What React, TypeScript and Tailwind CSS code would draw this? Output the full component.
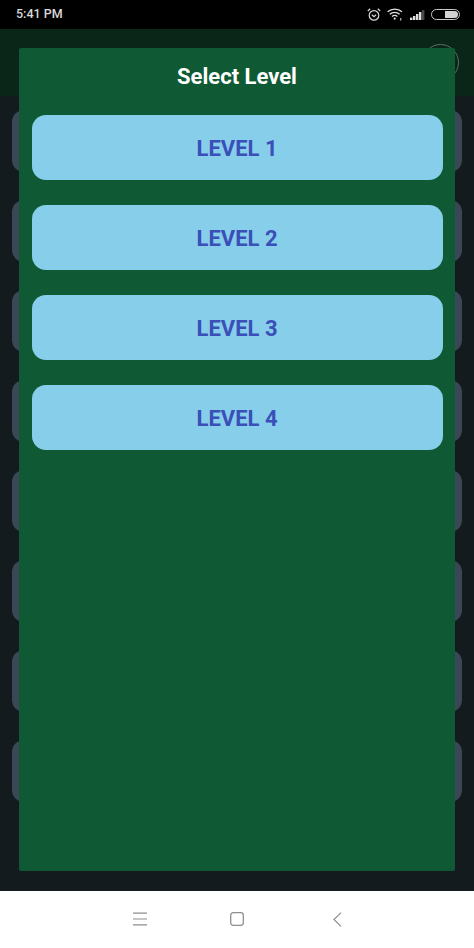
import React from 'react';

const levels = ['LEVEL 1', 'LEVEL 2', 'LEVEL 3', 'LEVEL 4'];
const rows = [1, 2, 3, 4, 5, 6, 7, 8];

function StatusIcons() {
    return (
        <div className="flex items-center">
            {/* alarm */}
            <svg width="14" height="13" viewBox="0 0 14 13" fill="none" stroke="#d8d8d8" strokeWidth="1.2" className="mr-[6px]">
                <circle cx="7" cy="7.4" r="4.8" />
                <path d="M4.9 6.8 7 8.6l2.1-1.8" />
                <path d="M0.8 3 3.2 0.8M13.2 3 10.8 0.8" />
            </svg>
            {/* wifi */}
            <svg width="16" height="13" viewBox="0 0 16 13" fill="none" stroke="#e0e0e0" strokeWidth="1.3" className="mr-[7px]">
                <path d="M0.6 3.8C4.6 0.2 11 0.2 15 3.8" />
                <path d="M2.8 6.2C5.6 3.8 9.9 3.8 12.6 6.2" />
                <path d="M5 8.5C6.6 7.2 8.8 7.2 10.4 8.5" />
                <circle cx="7.7" cy="10.6" r="1.1" fill="#e0e0e0" stroke="none" />
                <rect x="13" y="10" width="1.4" height="2.6" fill="#9a9a9a" stroke="none" />
            </svg>
            {/* signal */}
            <svg width="15" height="10" viewBox="0 0 15 10" className="mr-[6px]">
                <rect x="0" y="7.6" width="2.4" height="2.4" fill="#e0e0e0" />
                <rect x="3" y="6" width="2.4" height="4" fill="#e0e0e0" />
                <rect x="6" y="4" width="2.4" height="6" fill="#e0e0e0" />
                <rect x="9" y="2" width="2.4" height="8" fill="#e0e0e0" />
                <rect x="12" y="0" width="2.4" height="10" fill="#4a4a4a" />
            </svg>
            {/* battery */}
            <div className="flex h-[11px] w-[29px] justify-end rounded-full border border-[#c8c8c8] p-px">
                <div className="h-full w-[13px] rounded-r-full bg-[#d4d4d4]" />
            </div>
        </div>
    );
}

export default function App() {
    return (
        <div className="relative flex h-[948px] w-[474px] flex-col overflow-hidden bg-[#141b1e] font-['Roboto',sans-serif]">
            <div className="flex h-[29px] shrink-0 items-center justify-between bg-black pr-[14px] pl-4">
                <span className="text-[12.5px] font-medium text-[#d8d8d8]">5:41 PM</span>
                <StatusIcons />
            </div>

            <div className="flex h-[67px] shrink-0 items-start justify-end bg-[#0a2618] pt-[15px] pr-[15px]">
                <div className="h-[37px] w-[37px] rounded-full border border-[#5b6b62]" />
            </div>

            <div className="flex flex-1 flex-col gap-7 px-3 pt-[14px]">
                {rows.map((row) => (
                    <div key={row} className="h-[62px] rounded-xl bg-[#3a4856]" />
                ))}
            </div>

            <div className="h-[57px] shrink-0 bg-white">
                <div className="flex h-full items-center gap-[83px] pb-[1px] pl-[133px]">
                    <svg width="14" height="14" viewBox="0 0 14 14" fill="none" stroke="#8f8f8f" strokeWidth="1.2">
                        <path d="M0 1.2h14M0 7h14M0 12.8h14" />
                    </svg>
                    <svg width="14" height="14" viewBox="0 0 14 14" fill="none" stroke="#8f8f8f" strokeWidth="1.3">
                        <rect x="0.7" y="0.7" width="12.6" height="12.6" rx="2.5" />
                    </svg>
                    <svg width="9" height="15" viewBox="0 0 9 15" fill="none" stroke="#8f8f8f" strokeWidth="1.2" className="ml-[6px]">
                        <path d="M8 0.6 1 7.5l7 6.9" />
                    </svg>
                </div>
            </div>

            <div className="absolute top-[48px] left-[19px] flex h-[823px] w-[436px] flex-col rounded-[2px] bg-[#0f5a35] px-[12.5px]">
                <h1 className="mt-[15px] mb-[23.5px] text-center text-[22px] leading-[28px] font-bold text-white">Select Level</h1>
                <div className="flex flex-col gap-[24.5px]">
                    {levels.map((level) => (
                        <button
                            key={level}
                            className="h-[65.5px] rounded-[14px] bg-[#87ceeb] pt-[2px] text-center text-[22px] font-bold text-[#3a4fb8]"
                        >
                            {level}
                        </button>
                    ))}
                </div>
            </div>
        </div>
    );
}
